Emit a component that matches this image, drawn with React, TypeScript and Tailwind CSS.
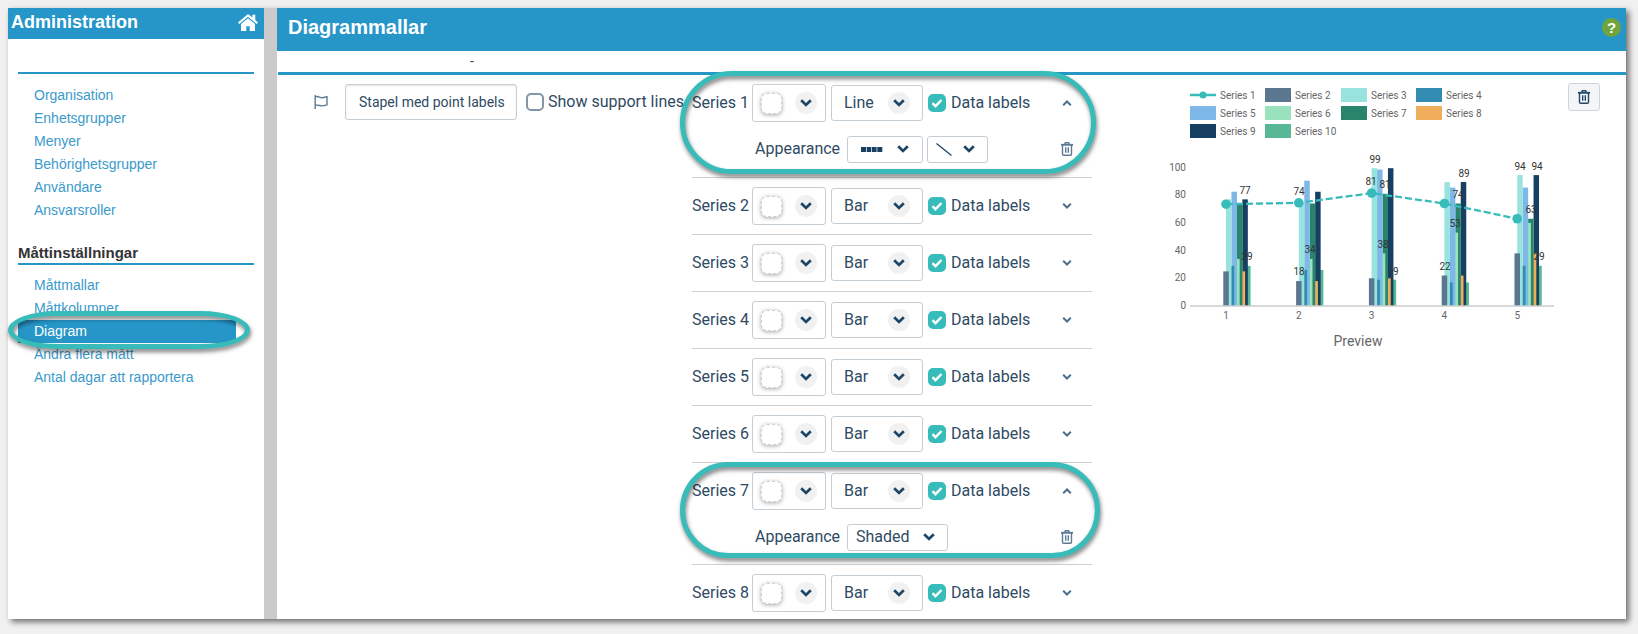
import React from 'react';

interface Series {
  id: number;
  type: string;
  appearance?: 'line' | 'bar';
  callout?: string;
}

interface ChartSeries {
  name: string;
  color: string;
  values: number[];
}

const adminLinks = ['Organisation', 'Enhetsgrupper', 'Menyer', 'Behörighetsgrupper', 'Användare', 'Ansvarsroller'];

const measureLinks = ['Måttmallar', 'Måttkolumner', 'Diagram', 'Ändra flera mått', 'Antal dagar att rapportera'];

const seriesList: Series[] = [
  { id: 1, type: 'Line', appearance: 'line', callout: '-left-3 -right-1 -top-1 h-[103px]' },
  { id: 2, type: 'Bar' },
  { id: 3, type: 'Bar' },
  { id: 4, type: 'Bar' },
  { id: 5, type: 'Bar' },
  { id: 6, type: 'Bar' },
  { id: 7, type: 'Bar', appearance: 'bar', callout: '-left-3 -right-2 -top-px h-[96px]' },
  { id: 8, type: 'Bar' },
];

const lineValues = [73.5, 74.5, 81.5, 74, 63];

const barSeries: ChartSeries[] = [
  { name: 'Series 2', color: '#5b7790', values: [25, 18, 20, 22, 38] },
  { name: 'Series 3', color: '#98e3de', values: [77, 75, 99.5, 89.5, 94.5] },
  { name: 'Series 4', color: '#328bb0', values: [29, 26, 19, 17, 29] },
  { name: 'Series 5', color: '#7db8e8', values: [82.5, 90.5, 98.5, 85.5, 85.5] },
  { name: 'Series 6', color: '#98e3bd', values: [34, 34, 38, 53, 60] },
  { name: 'Series 7', color: '#28856b', values: [74, 74, 81, 74, 63] },
  { name: 'Series 8', color: '#f0ae5c', values: [25, 18, 20, 22, 38] },
  { name: 'Series 9', color: '#163f61', values: [77, 82.5, 99.5, 89.5, 94.5] },
  { name: 'Series 10', color: '#58b895', values: [29, 26, 19, 17, 29] },
];

const pointLabels = [
  { text: '77', x: 81, y: 119 },
  { text: '29', x: 83, y: 185 },
  { text: '74', x: 135, y: 120 },
  { text: '34', x: 146, y: 178 },
  { text: '18', x: 135, y: 200 },
  { text: '99', x: 211, y: 88 },
  { text: '81', x: 207, y: 110 },
  { text: '81', x: 221, y: 113 },
  { text: '38', x: 219, y: 173 },
  { text: '19', x: 229, y: 200 },
  { text: '89', x: 300, y: 102 },
  { text: '74', x: 294, y: 123 },
  { text: '53', x: 291, y: 152 },
  { text: '22', x: 281, y: 195 },
  { text: '94', x: 356, y: 95 },
  { text: '94', x: 373, y: 95 },
  { text: '63', x: 367, y: 138 },
  { text: '29', x: 375, y: 185 },
];

const AXIS_Y = 231;
const groupX = (index: number) => 62 + index * 72.8;
const valueY = (value: number) => AXIS_Y - value * 1.385;

const HomeIcon: React.FC = () => (
  <svg viewBox="0 0 20 17" className="h-[17px] w-5" fill="currentColor">
    <path d="M10 0L0 8.6l1.3 1.5L10 2.7l8.7 7.4L20 8.6l-2.7-2.4V.8h-3v2.8z" />
    <path d="M10 4.2L3 10.1V17h5.3v-4.8h3.4V17H17v-6.9z" />
  </svg>
);

const FlagIcon: React.FC = () => (
  <svg viewBox="0 0 14 14" className="h-[14px] w-[14px] text-[#5c7a94]" fill="none" stroke="currentColor" strokeWidth={1.4}>
    <path d="M1.2 0v14M1.2 1.8c3-1 4.500.9 6.500.9S11 2.200 13 1.600v8.200c-2 .7-3.300 1.100-5.300 1.100S4.200 9.500 1.200 10.300" />
  </svg>
);

const TrashIcon: React.FC<{ className: string }> = ({ className }) => (
  <svg viewBox="0 0 12 14" className={`h-[14px] w-3 ${className}`} fill="none" stroke="currentColor" strokeWidth={1.4}>
    <path d="M0 2.800h12" strokeWidth={1.900} />
    <path d="M3.600 2.800L4.300.8h3.400l.7 2M1.500 2.800v9.400c0 .7.400 1.100 1.100 1.100h6.800c.7 0 1.100-.4 1.100-1.100V2.800M4.700 5.300v5.400M7.300 5.300v5.400" />
  </svg>
);

const Chevron: React.FC = () => (
  <svg viewBox="0 0 12 8" className="h-2 w-3 text-[#1d4566]" fill="none" stroke="currentColor" strokeWidth={2.8}>
    <path d="M1.200 1.300L6 5.900l4.800-4.600" />
  </svg>
);

const RoundChevron: React.FC = () => (
  <span className="flex h-[22px] w-[22px] items-center justify-center rounded-full bg-[#f1f1f1]">
    <Chevron />
  </span>
);

const CheckBox: React.FC<{ id: string; checked?: boolean }> = ({ id, checked }) => (
  <span className="relative flex h-[18px] w-[18px] shrink-0">
    <input
      id={id}
      type="checkbox"
      defaultChecked={checked}
      className="peer h-[18px] w-[18px] appearance-none rounded-[5px] border-2 border-[#8296a8] bg-white checked:border-[#37bcba] checked:bg-[#37bcba]"
    />
    <svg
      viewBox="0 0 18 18"
      className="pointer-events-none absolute inset-0 hidden text-white peer-checked:block"
      fill="none"
      stroke="currentColor"
      strokeWidth={2.4}
    >
      <path d="M4.500 9.200l3 3 6-6.200" />
    </svg>
  </span>
);

const Callout: React.FC<{ className: string }> = ({ className }) => (
  <span
    className={`pointer-events-none absolute z-10 border-[#37bcba] drop-shadow-[1px_3px_2px_rgba(0,0,0,0.5)] ${className}`}
  />
);

const Sidebar: React.FC = () => (
  <aside className="w-64 shrink-0 font-['Liberation_Sans',Arial,sans-serif] text-[14px] leading-[23px]">
    <div className="flex h-[31px] items-center justify-between bg-[#2696c8] pr-[6px] pb-[3px] pl-[3px] text-white">
      <h1 className="text-[18px] leading-[26px] font-bold">Administration</h1>
      <a href="#home" aria-label="Home">
        <HomeIcon />
      </a>
    </div>
    <nav className="px-[10px] text-[#3a9acb]">
      <div className="h-[35px] border-b-2 border-[#2696c8]" />
      <ul className="pt-[10px] pl-4">
        {adminLinks.map((link) => (
          <li key={link}>
            <a href="#admin">{link}</a>
          </li>
        ))}
      </ul>
      <h2 className="mt-[21px] border-b-2 border-[#2696c8] text-[15px] leading-5 font-bold text-[#333]">
        Måttinställningar
      </h2>
      <ul className="pt-[9px]">
        {measureLinks.map((link) => (
          <li key={link} className={link === 'Diagram' ? 'relative mr-[18px] bg-[#2696c8] pl-4 text-white' : 'pl-4'}>
            <a href="#measures">{link}</a>
            {link === 'Diagram' && (
              <Callout className="-top-[9px] -right-[14px] -left-[10px] h-[38px] rounded-[50px/19px] border-[5px]" />
            )}
          </li>
        ))}
      </ul>
    </nav>
  </aside>
);

const Appearance: React.FC<{ series: Series }> = ({ series }) => (
  <div className="mt-[14px] flex h-[26px] items-center pr-[15px] pl-[63px]">
    <span className="w-[92px]">Appearance</span>
    {series.appearance === 'line' ? (
      <div className="flex gap-1">
        <button
          type="button"
          aria-label="Line pattern"
          className="flex h-[27px] w-[76px] items-center justify-between rounded-[3px] border border-[#c5cdd5] pr-[13px] pl-[13px]"
        >
          <svg viewBox="0 0 22 5" className="h-[5px] w-[22px]" fill="#163f61">
            <path d="M0 0h5v5H0zM5.700 0h4.600v5H5.700zM11 0h4.600v5H11zM16.300 0h5v5h-5z" />
          </svg>
          <Chevron />
        </button>
        <button
          type="button"
          aria-label="Point style"
          className="flex h-[27px] w-[61px] items-center justify-between rounded-[3px] border border-[#c5cdd5] pr-3 pl-2"
        >
          <svg viewBox="0 0 16 13" className="h-[13px] w-4" stroke="#163f61" strokeWidth={1.2}>
            <path d="M.5.5l15 12" />
          </svg>
          <Chevron />
        </button>
      </div>
    ) : (
      <div className="relative flex items-center">
        <select
          aria-label="Bar appearance"
          defaultValue="Shaded"
          className="h-[27px] w-[101px] appearance-none rounded-[3px] border border-[#c5cdd5] bg-white pl-2"
        >
          <option>Shaded</option>
          <option>Solid</option>
        </select>
        <span className="pointer-events-none absolute right-[13px]">
          <Chevron />
        </span>
      </div>
    )}
    <button type="button" aria-label={`Delete series ${series.id}`} className="ml-auto flex w-5 justify-center">
      <TrashIcon className="text-[#5c7a94]" />
    </button>
  </div>
);

const SeriesRow: React.FC<{ series: Series }> = ({ series }) => (
  <li className="relative border-b border-[#cfcfcf] pt-[9px] pb-[9px] first:pb-[15px] last:border-b-0 last:pb-[7px]">
    <div className="flex h-[38px] items-center pr-[15px]">
      <span className="w-[60px] shrink-0">Series {series.id}</span>
      <button
        type="button"
        aria-label={`Color of series ${series.id}`}
        className="mr-[5px] flex h-[38px] w-[74px] items-center justify-between rounded-[3px] border border-[#c5cdd5] px-2"
      >
        <span className="h-[21px] w-[21px] rounded-[6px] border border-dashed border-[#d0d0d0] bg-white shadow-[0_1px_4px_rgba(0,0,0,0.35)]" />
        <RoundChevron />
      </button>
      <div className="relative mr-[5px] flex items-center">
        <select
          aria-label={`Type of series ${series.id}`}
          defaultValue={series.type}
          className="h-9 w-[92px] appearance-none rounded-[3px] border border-[#c5cdd5] bg-white pl-3"
        >
          <option>Line</option>
          <option>Bar</option>
        </select>
        <span className="pointer-events-none absolute right-[13px]">
          <RoundChevron />
        </span>
      </div>
      <CheckBox id={`labels-${series.id}`} checked />
      <label htmlFor={`labels-${series.id}`} className="ml-[5px]">
        Data labels
      </label>
      <button
        type="button"
        aria-label={`Toggle series ${series.id}`}
        className="ml-auto flex w-5 justify-center text-[#4a6e8c]"
      >
        <svg viewBox="0 0 10 6" className="h-[6px] w-[10px]" fill="none" stroke="currentColor" strokeWidth={2}>
          <path d={series.appearance ? 'M1.200 5.200L5 1.500l3.800 3.700' : 'M1.200.8L5 4.500 8.800.8'} />
        </svg>
      </button>
    </div>
    {series.appearance && <Appearance series={series} />}
    {series.appearance === 'bar' && <div className="h-[5px]" />}
    {series.callout && <Callout className={`rounded-[52px] border-[5px] ${series.callout}`} />}
  </li>
);

const ChartPreview: React.FC = () => (
  <figure className="w-[392px] shrink-0">
    <svg viewBox="0 0 392 240" className="h-[240px] w-[392px] overflow-visible text-[10px]" fill="#666">
      <path d="M26 20h26" stroke="#37bcba" strokeWidth={2.5} />
      <circle cx={39} cy={20} r={3.5} fill="#37bcba" />
      <text x={56} y={24}>Series 1</text>
      {barSeries.map((series, i) => {
        const x = 26 + Math.round(((i + 1) % 4) * 75.4);
        const y = 13 + Math.floor((i + 1) / 4) * 18;
        return (
          <g key={series.name}>
            <rect x={x} y={y} width={26} height={14} fill={series.color} />
            <text x={x + 30} y={y + 11}>{series.name}</text>
          </g>
        );
      })}
      {[0, 20, 40, 60, 80, 100].map((tick) => (
        <text key={tick} x={22} y={valueY(tick) + 3} textAnchor="end">{tick}</text>
      ))}
      {/* the first series lies in front of the later ones */}
      {barSeries
        .map((series, i) => (
          <g key={series.name} fill={series.color}>
            {series.values.map((value, group) => (
              <rect
                key={group}
                x={groupX(group) - 2.7 + i * 2.72}
                y={valueY(value)}
                width={5.5}
                height={AXIS_Y - valueY(value)}
              />
            ))}
          </g>
        ))
        .reverse()}
      <path d="M26 231h364" stroke="#ccc" strokeWidth={1.6} />
      <polyline
        points={lineValues.map((value, i) => `${groupX(i)},${valueY(value)}`).join(' ')}
        fill="none"
        stroke="#37bcba"
        strokeWidth={2.3}
        strokeDasharray="7 3"
      />
      {lineValues.map((value, i) => (
        <g key={i}>
          <circle cx={groupX(i)} cy={valueY(value)} r={4.8} fill="#37bcba" />
          <text x={groupX(i)} y={244} textAnchor="middle">{i + 1}</text>
        </g>
      ))}
      <g fill="#333" textAnchor="middle">
        {pointLabels.map((label) => (
          <text key={`${label.x}-${label.y}`} x={label.x} y={label.y}>{label.text}</text>
        ))}
      </g>
    </svg>
    <figcaption className="mt-4 pr-1 text-center text-[14px] leading-5 text-[#666]">Preview</figcaption>
  </figure>
);

const App: React.FC = () => {
  return (
    <div className="min-h-screen bg-[#f1f1f1] pt-2 pr-3 pb-[15px] pl-2">
      <div className="flex bg-white shadow-[3px_3px_6px_rgba(0,0,0,0.55)]">
        <Sidebar />
        <div className="w-[13px] shrink-0 bg-[#cbcbcb]" />
        <main className="flex-1 font-[Roboto,sans-serif] text-[16px] leading-5 text-[#2f4a63]">
          <header className="flex h-[43px] items-center justify-between bg-[#2696c8] pr-[5px] pb-[5px] pl-[11px] font-['Liberation_Sans',Arial,sans-serif] text-white">
            <h1 className="text-[20px] font-bold">Diagrammallar</h1>
            <button type="button" aria-label="Help" className="h-[19px] w-[19px] rounded-full bg-[#70a43c] text-[15px] leading-[19px] font-bold">
              ?
            </button>
          </header>
          <div className="ml-px h-6 border-b-[3px] border-[#2696c8] pl-48 text-[14px]">-</div>
          <div className="flex items-start">
            <div className="flex w-[415px] shrink-0 items-center pt-[9px] pl-[37px]">
              <FlagIcon />
              <input
                type="text"
                aria-label="Template name"
                defaultValue="Stapel med point labels"
                className="mr-[9px] ml-[17px] h-9 w-[172px] rounded-[3px] border border-[#c5cdd5] pr-1 pl-[13px] text-[14px] shadow-[inset_0_1px_2px_rgba(0,0,0,0.1)]"
              />
              <CheckBox id="support-lines" />
              <label htmlFor="support-lines" className="ml-1 whitespace-nowrap">
                Show support lines
              </label>
            </div>
            <ul className="w-[400px] shrink-0">
              {seriesList.map((series) => (
                <SeriesRow key={series.id} series={series} />
              ))}
            </ul>
            <div className="ml-auto flex gap-3 pr-[26px]">
              <ChartPreview />
              <button
                type="button"
                aria-label="Delete template"
                className="mt-2 flex h-7 w-8 items-center justify-center rounded-[3px] border border-[#cdd5dc] bg-[#f4f5f7]"
              >
                <TrashIcon className="text-[#24496b]" />
              </button>
            </div>
          </div>
        </main>
      </div>
    </div>
  );
};

export default App;
